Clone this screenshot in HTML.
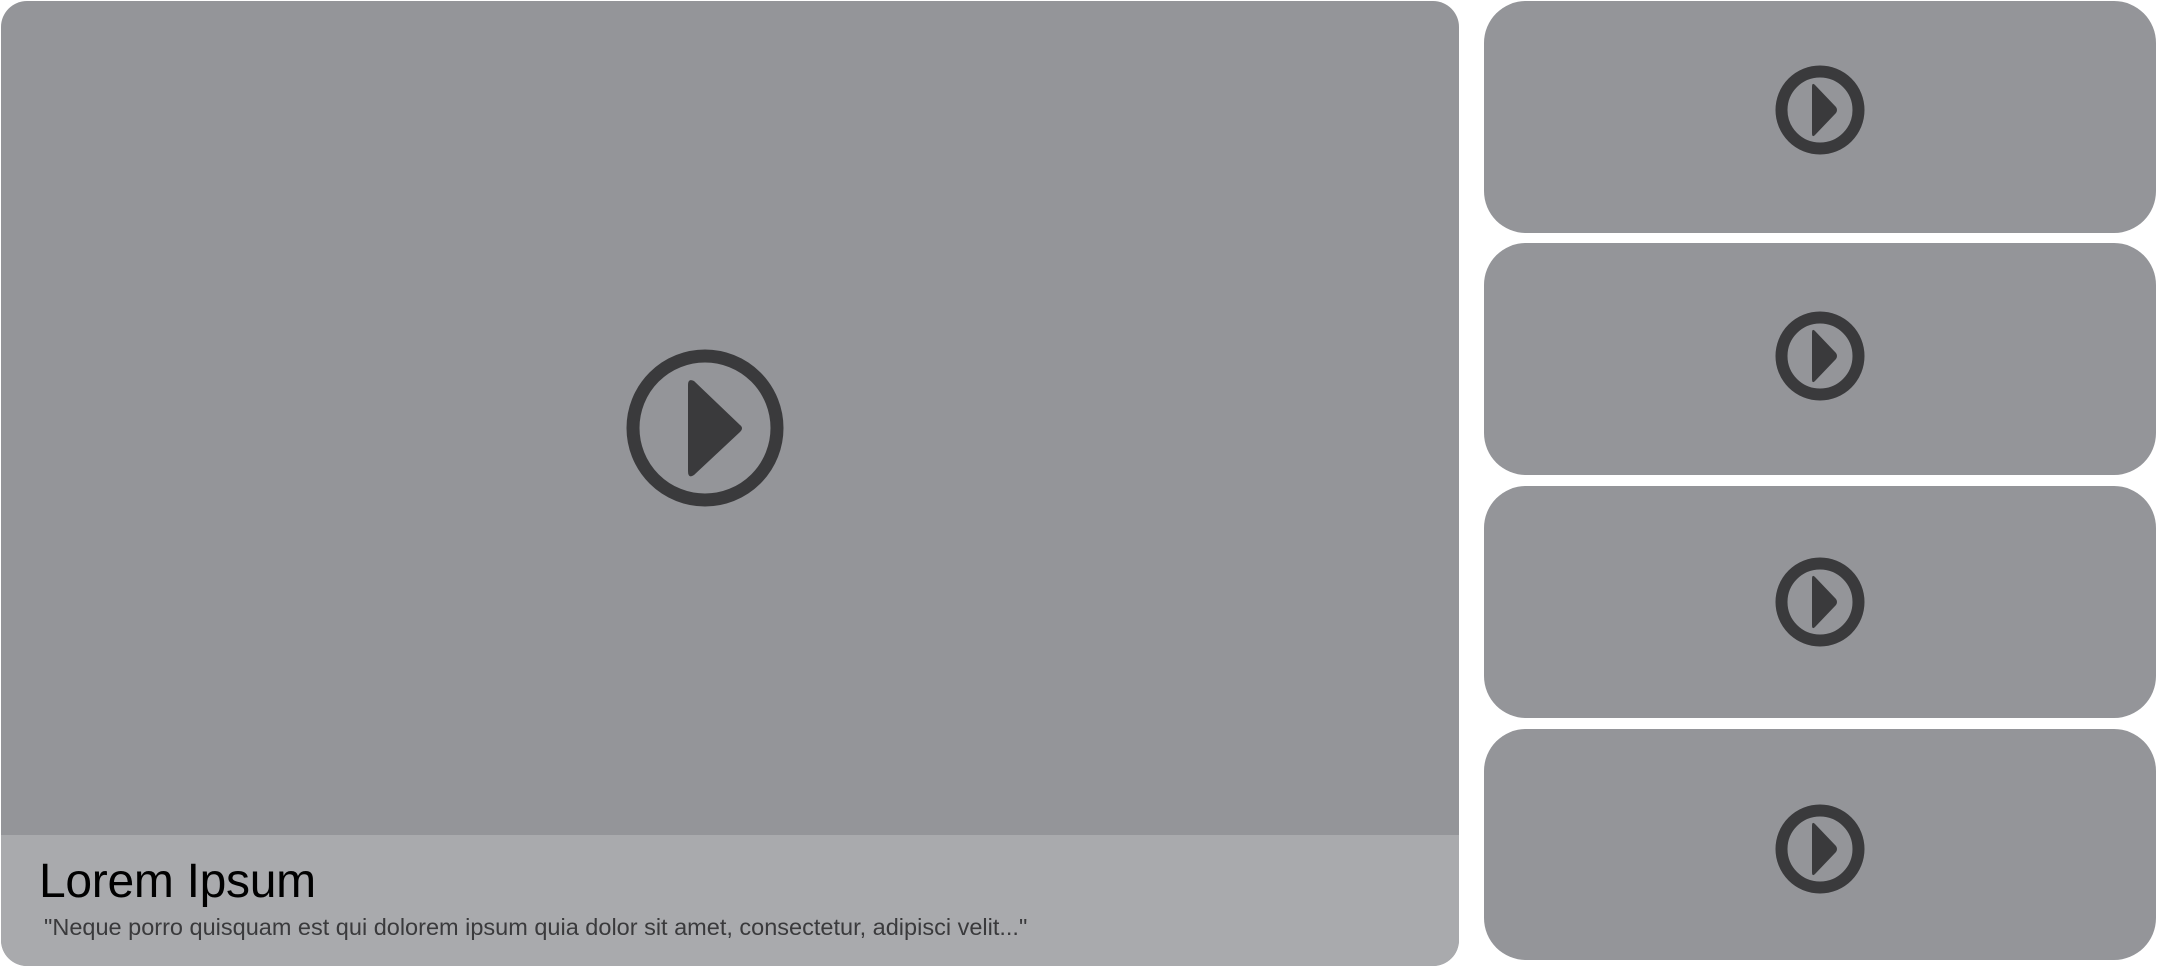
<!DOCTYPE html>
<html><head><meta charset="utf-8"><style>
html,body{margin:0;padding:0;background:#fff;width:2157px;height:967px;overflow:hidden;position:relative;font-family:"Liberation Sans",sans-serif}
.main{position:absolute;left:1px;top:1px;width:1458px;height:965px;background:#949599;border-radius:26px;overflow:hidden}
.cap{position:absolute;left:0;right:0;top:834px;bottom:0;background:#a9aaad}
.title{position:absolute;left:39px;top:854px;font-size:48px;color:#000;letter-spacing:-0.3px;line-height:56px}
.sub{position:absolute;left:44px;top:913px;font-size:23.5px;color:#3a3a3c;line-height:28px}
.card{position:absolute;left:1484px;width:672px;height:232px;background:#949599;border-radius:42px}
svg{position:absolute}
</style></head><body>
<div class="main">
<svg style="left:625px;top:348px" width="158" height="158" viewBox="0 0 158 158"><circle cx="79" cy="79" r="72" fill="none" stroke="#3a3a3c" stroke-width="13"/><path d="M62 36 Q62 29 68 32 L114 76 Q118 79 114 83 L68 126 Q62 130 62 122 Z" fill="#3a3a3c"/></svg>
<div class="cap"></div>
</div>
<div class="title">Lorem Ipsum</div>
<div class="sub">"Neque porro quisquam est qui dolorem ipsum quia dolor sit amet, consectetur, adipisci velit..."</div>

<div class="card" style="top:1px"><svg style="left:291px;top:64px" width="90" height="90" viewBox="0 0 90 90"><circle cx="45" cy="45" r="38.5" fill="none" stroke="#3a3a3c" stroke-width="12"/><path d="M37 22 Q37 17 40 20 L61 42 Q63 45 61 48 L40 70 Q37 73 37 68 Z" fill="#3a3a3c"/></svg></div>
<div class="card" style="top:243px"><svg style="left:291px;top:68px" width="90" height="90" viewBox="0 0 90 90"><circle cx="45" cy="45" r="38.5" fill="none" stroke="#3a3a3c" stroke-width="12"/><path d="M37 22 Q37 17 40 20 L61 42 Q63 45 61 48 L40 70 Q37 73 37 68 Z" fill="#3a3a3c"/></svg></div>
<div class="card" style="top:486px"><svg style="left:291px;top:71px" width="90" height="90" viewBox="0 0 90 90"><circle cx="45" cy="45" r="38.5" fill="none" stroke="#3a3a3c" stroke-width="12"/><path d="M37 22 Q37 17 40 20 L61 42 Q63 45 61 48 L40 70 Q37 73 37 68 Z" fill="#3a3a3c"/></svg></div>
<div class="card" style="top:729px;height:231px"><svg style="left:291px;top:75px" width="90" height="90" viewBox="0 0 90 90"><circle cx="45" cy="45" r="38.5" fill="none" stroke="#3a3a3c" stroke-width="12"/><path d="M37 22 Q37 17 40 20 L61 42 Q63 45 61 48 L40 70 Q37 73 37 68 Z" fill="#3a3a3c"/></svg></div>
</body></html>
